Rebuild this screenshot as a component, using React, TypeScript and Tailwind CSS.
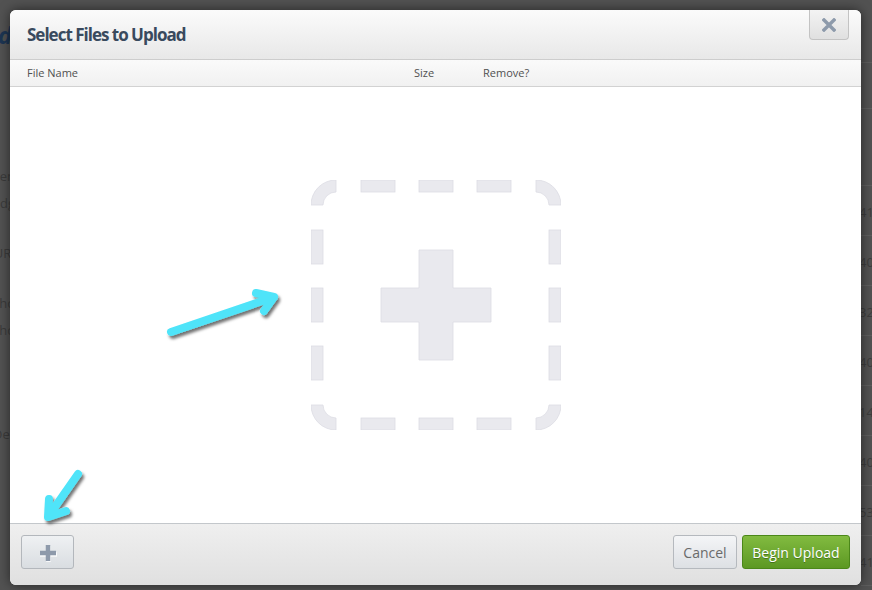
import React from "react";

function Side() {
  return (
    <g>
      <path d="M0 25 A25 25 0 0 1 25 0 L25 12 A13 13 0 0 0 12 25 Z" />
      <rect x="50" y="0" width="34" height="12" />
      <rect x="108" y="0" width="34" height="12" />
      <rect x="166" y="0" width="34" height="12" />
    </g>
  );
}

function DropZone() {
  return (
    <svg width="250" height="250" viewBox="0 0 250 250" className="block">
      <g fill="#e9e9ee" stroke="#dcdce3" strokeWidth="0.8">
        <Side />
        <g transform="rotate(90 125 125)">
          <Side />
        </g>
        <g transform="rotate(180 125 125)">
          <Side />
        </g>
        <g transform="rotate(270 125 125)">
          <Side />
        </g>
        <path d="M108 70 H142 V108 H180 V142 H142 V180 H108 V142 H70 V108 H108 Z" />
      </g>
    </svg>
  );
}

export default function App() {
  return (
    <div className="relative flex w-[872px] h-[590px] overflow-hidden bg-[#525252] font-['Open_Sans',sans-serif]">
      {/* left strip of page behind */}
      <div className="flex w-[10px] shrink-0 flex-col overflow-hidden text-[13px] leading-[16px] text-[#3b3b3b]">
        <div className="mt-[22px] flex h-[26px] justify-end">
          <span className="-mr-[2px] whitespace-nowrap text-[24px] font-bold italic leading-[26px] text-[#1d3553]">
            d
          </span>
        </div>
        <div className="mt-[120px] flex h-[16px] justify-end">
          <span className="-mr-[5px] whitespace-nowrap">ten</span>
        </div>
        <div className="mt-[11px] flex h-[16px] justify-end">
          <span className="-mr-[5px] whitespace-nowrap">adg</span>
        </div>
        <div className="mt-[34px] flex h-[16px] justify-end">
          <span className="-mr-[5px] whitespace-nowrap">URI</span>
        </div>
        <div className="mt-[34px] flex h-[16px] justify-end">
          <span className="-mr-[5px] whitespace-nowrap">Pho</span>
        </div>
        <div className="mt-[11px] flex h-[16px] justify-end">
          <span className="-mr-[5px] whitespace-nowrap">Pho</span>
        </div>
        <div className="mt-[88px] flex h-[16px] justify-end">
          <span className="-mr-[5px] whitespace-nowrap">Oer</span>
        </div>
      </div>

      {/* modal */}
      <div className="relative z-10 mt-[10px] flex h-[575px] w-[851px] shrink-0 flex-col overflow-hidden rounded-[6px] bg-white shadow-[0_0_12px_rgba(0,0,0,0.55)]">
        {/* header */}
        <div className="flex h-[50px] shrink-0 items-start justify-between border-b border-[#cdcdcd] bg-gradient-to-b from-[#fbfbfb] to-[#e8e8e8]">
          <div className="pl-[17px] pt-[13px] text-[17px] font-bold leading-[24px] tracking-[-1px] text-[#394a5e]">
            Select Files to Upload
          </div>
          <div className="mr-[12px] flex h-[30px] w-[40px] items-center justify-center rounded-b-[4px] border border-t-0 border-[#c3c3c3] bg-gradient-to-b from-[#f3f3f3] to-[#e0e0e0]">
            <svg width="14" height="14" viewBox="0 0 14 14">
              <path d="M2 2 L12 12 M12 2 L2 12" stroke="#8d9aab" strokeWidth="3.4" strokeLinecap="square" />
            </svg>
          </div>
        </div>

        {/* column headings */}
        <div className="flex h-[27px] shrink-0 items-center border-b border-[#d2d2d2] bg-gradient-to-b from-[#fafafa] to-[#f1f1f1] pl-[17px] text-[11px] text-[#505050]">
          <div className="w-[387px]">File Name</div>
          <div className="w-[69px]">Size</div>
          <div>Remove?</div>
        </div>

        {/* body */}
        <div className="flex flex-1 items-center justify-center bg-white">
          <DropZone />
        </div>

        {/* footer */}
        <div className="flex h-[62px] shrink-0 items-start justify-between border-t border-[#c3c7cb] bg-gradient-to-b from-[#efefef] to-[#e0e0e0] pl-[11px] pr-[11px] pt-[11px]">
          <button className="flex h-[34px] w-[53px] items-center justify-center rounded-[3px] border border-[#b3b7bc] bg-gradient-to-b from-[#eff1f3] to-[#d9dde1]">
            <svg width="18" height="18" viewBox="0 0 18 18" className="mt-[4px]">
              <path d="M9.5 1 V17 M1 9.5 H18" stroke="#ffffff" strokeWidth="4.5" opacity="0.8" />
              <path d="M9 0 V16 M1 8 H17" stroke="#8e9aab" strokeWidth="4.5" />
            </svg>
          </button>
          <div className="flex gap-[5px]">
            <button className="h-[34px] w-[64px] rounded-[3px] border border-[#b5b9be] bg-gradient-to-b from-[#f4f5f7] to-[#dde0e4] text-[14px] text-[#6a6a6a]">
              Cancel
            </button>
            <button className="h-[34px] w-[108px] rounded-[3px] border border-[#4b8719] bg-gradient-to-b from-[#82bb40] to-[#5c9822] text-[14px] text-white [text-shadow:0_1px_0_rgba(0,0,0,0.3)]">
              Begin Upload
            </button>
          </div>
        </div>
      </div>

      {/* right strip of page behind */}
      <div className="flex w-[11px] shrink-0 flex-col overflow-hidden text-[13px] text-[#3d3d3d]">
        <div className="mt-[62px] h-px bg-[#5e5e5e]" />
        <div className="mt-[45px] h-px bg-[#5e5e5e]" />
        <div className="mt-[76px] flex flex-col border-t border-[#5e5e5e]">
          {["41", "40", "32", "40", "14", "40", "53", "41"].map((n, i) => (
            <div key={i} className="flex h-[50px] items-center border-b border-[#5e5e5e] pt-[4px]">
              <span className="-ml-[2px] whitespace-nowrap">{n}</span>
            </div>
          ))}
        </div>
      </div>

      {/* annotation arrows */}
      <svg className="pointer-events-none absolute left-0 top-0 z-20" width="872" height="590" viewBox="0 0 872 590">
        <defs>
          <filter id="sh" x="-30%" y="-30%" width="160%" height="160%">
            <feDropShadow dx="2" dy="3" stdDeviation="1.8" floodColor="#000" floodOpacity="0.55" />
          </filter>
        </defs>
        <g filter="url(#sh)" fill="none" stroke="#4fe4f9" strokeWidth="8" strokeLinecap="round" strokeLinejoin="round">
          <path d="M171 332 L274 297 M256 293 L274 297 L264 311" />
          <path d="M78 474 L50 514 M49 499 L48 517 L66 511" />
        </g>
      </svg>
    </div>
  );
}
